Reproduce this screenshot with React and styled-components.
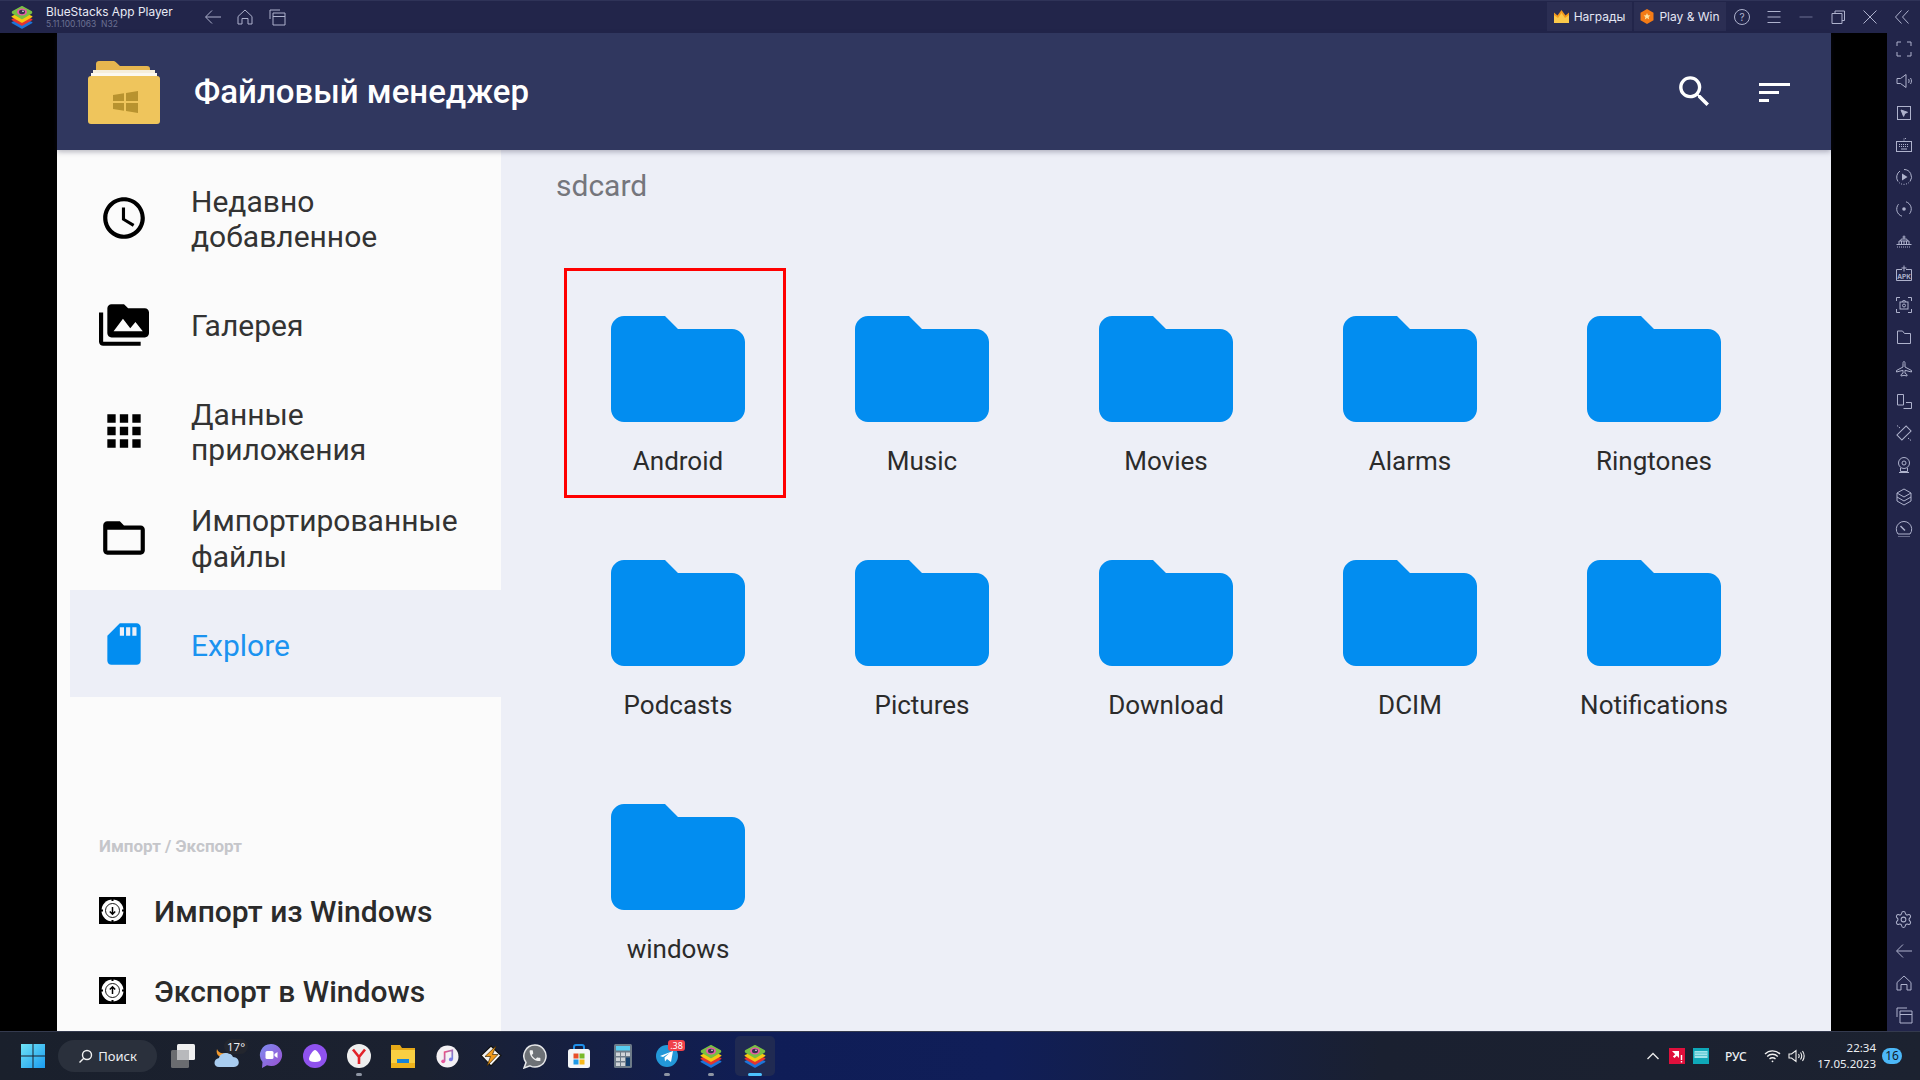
import React from 'react';
import styled, { createGlobalStyle } from 'styled-components';
import { MdAccessTime, MdPermMedia, MdApps, MdFolderOpen, MdSdStorage, MdSearch } from 'react-icons/md';
import { Settings } from 'lucide-react';

const GlobalStyle = createGlobalStyle`
  html, body {
    margin: 0;
    padding: 0;
    background: #000;
    overflow: hidden;
  }
  * {
    box-sizing: border-box;
  }
`;

const Screen = styled.div`
  width: 1920px;
  height: 1080px;
  display: flex;
  flex-direction: column;
  font-family: Roboto, "Noto Sans", sans-serif;
`;

// BlueStacks window chrome
const TitleBar = styled.div`
  height: 33px;
  flex: none;
  display: flex;
  align-items: stretch;
  padding: 1px 2px 2px 10px;
  background: #22254a;
  border-top: 1px solid #2f3358;
  color: #e4e6f2;
  font-family: Inter, sans-serif;
`;

const AppLogo = styled.div`
  width: 36px;
  display: flex;
  align-items: center;
`;

const AppName = styled.div`
  width: 151px;
  display: flex;
  flex-direction: column;
  justify-content: center;
`;

const AppTitle = styled.div`
  font-size: 11.9px;
  line-height: 15px;
  color: #e8eaf5;
  white-space: nowrap;
`;

const AppVersion = styled.div`
  font-size: 8.5px;
  line-height: 10px;
  color: #6b7092;
  white-space: pre;
`;

const ChromeButton = styled.div`
  width: 32px;
  display: flex;
  align-items: center;
  justify-content: center;
  color: ${(p) => p.$color || '#aeb2cd'};
`;

const ChromeRight = styled.div`
  margin-left: auto;
  display: flex;
  align-items: stretch;
`;

const ChromeTab = styled.div`
  width: ${(p) => p.$width}px;
  margin-right: ${(p) => p.$gap || 0}px;
  display: flex;
  align-items: center;
  justify-content: center;
  gap: 5px;
  background: #2b2e53;
  font-size: 12px;
  color: #e4e6f4;
`;

const Middle = styled.div`
  flex: 1;
  min-height: 0;
  display: flex;
  background: #000;
  padding-left: 57px;
`;

const AndroidApp = styled.div`
  width: 1774px;
  display: flex;
  flex-direction: column;
`;

const Rail = styled.div`
  width: 33px;
  margin-left: auto;
  flex: none;
  display: flex;
  flex-direction: column;
  justify-content: space-between;
  background: #22254a;
  color: #aeb2cc;
`;

const RailGroup = styled.div`
  display: flex;
  flex-direction: column;
`;

const RailButton = styled.div`
  height: 32px;
  display: flex;
  align-items: center;
  justify-content: center;
`;

// File manager header
const Header = styled.header`
  position: relative;
  z-index: 1;
  height: 117px;
  flex: none;
  display: flex;
  align-items: center;
  padding-left: 31px;
  background: #30375f;
  box-shadow: 0 2px 5px rgba(30, 30, 60, 0.3);
`;

const HeaderLogo = styled.div`
  width: 72px;
  height: 63px;
  margin-top: 1px;
`;

const HeaderTitle = styled.h1`
  margin: 0 0 0 34px;
  font-size: 33px;
  font-weight: 500;
  color: #fff;
  white-space: nowrap;
`;

const HeaderActions = styled.div`
  margin-left: auto;
  display: flex;
  align-items: center;
  padding-right: 41px;
  color: #fff;
`;

const SearchButton = styled.div`
  width: 41px;
  height: 41px;
  margin: -1px 44px 0 0;
  font-size: 41px;
  line-height: 0;
`;

const SortButton = styled.div`
  width: 31px;
  margin-top: 1px;
  display: flex;
  flex-direction: column;
  gap: 5px;
`;

const SortBar = styled.div`
  height: 3px;
  width: ${(p) => p.$width}px;
  background: #fff;
`;

const Body = styled.div`
  flex: 1;
  min-height: 0;
  display: flex;
`;

// Left navigation
const Sidebar = styled.nav`
  width: 444px;
  flex: none;
  display: flex;
  flex-direction: column;
  padding-top: 14px;
  background: #fbfbfb;
`;

const NavRow = styled.div`
  height: 106.5px;
  flex: none;
  margin-left: 13px;
  padding: 2px 0 0 29px;
  display: flex;
  align-items: center;
  gap: 42px;
  background: ${(p) => (p.$active ? '#edeff7' : 'transparent')};
  color: ${(p) => (p.$active ? '#1b93f0' : '#333')};
`;

const NavIcon = styled.div`
  width: 50px;
  height: 50px;
  flex: none;
  font-size: 50px;
  line-height: 0;
  color: ${(p) => (p.$active ? '#028df0' : '#000')};
`;

const NavText = styled.div`
  margin-top: 2px;
  font-size: 30px;
  line-height: 35.5px;
`;

const SectionLabel = styled.div`
  margin: 140px 0 0 42px;
  font-size: 17px;
  line-height: 19px;
  font-weight: 700;
  color: #c5c6ca;
`;

const TransferList = styled.div`
  margin-top: 15px;
  padding-left: 42px;
  display: flex;
  flex-direction: column;
`;

const TransferRow = styled.div`
  height: 80px;
  display: flex;
  align-items: center;
  gap: 28px;
`;

const TransferText = styled.div`
  margin-top: 2px;
  font-size: 30px;
  font-weight: 500;
  color: #2b2b2b;
  white-space: nowrap;
`;

// Folder grid
const Main = styled.main`
  flex: 1;
  padding-left: 55px;
  background: #edeff7;
`;

const PathLabel = styled.div`
  height: 118px;
  padding-top: 17px;
  font-size: 30px;
  line-height: 38px;
  color: #75767c;
`;

const FolderGrid = styled.div`
  display: grid;
  grid-template-columns: repeat(5, 244px);
  grid-auto-rows: 244px;
`;

const FolderCell = styled.div`
  position: relative;
  display: flex;
  flex-direction: column;
  align-items: center;
  padding-top: 48px;
`;

const FolderName = styled.div`
  margin-top: 24px;
  font-size: 26px;
  line-height: 30px;
  color: #2b2b2b;
`;

const Highlight = styled.div`
  position: absolute;
  left: 8px;
  top: 0;
  width: 222px;
  height: 230px;
  border: 3px solid #f00;
`;

// Windows taskbar
const Taskbar = styled.footer`
  height: 49px;
  flex: none;
  display: flex;
  align-items: center;
  padding-left: 11px;
  border-top: 1px solid #343a4e;
  background: linear-gradient(90deg, #1a202c 0%, #1b2130 22%, #0f1d57 40%, #101e58 52%, #1a2030 72%, #1c2230 100%);
  font-family: "Noto Sans", sans-serif;
  color: #eceef2;
`;

const TaskSlot = styled.div`
  position: relative;
  width: 44px;
  height: 44px;
  flex: none;
  display: flex;
  align-items: center;
  justify-content: center;
`;

const ActiveBox = styled.div`
  position: absolute;
  inset: 2px;
  border-radius: 5px;
  background: #202a52;
`;

const LogoLayer = styled.div`
  position: relative;
  display: flex;
`;

const RunDot = styled.div`
  position: absolute;
  left: 50%;
  bottom: 2px;
  width: ${(p) => (p.$active ? 14 : 6)}px;
  height: 3px;
  margin-left: ${(p) => (p.$active ? -7 : -3)}px;
  border-radius: 2px;
  background: ${(p) => (p.$active ? '#4cc2ff' : '#8e95a3')};
`;

const SearchPill = styled.div`
  width: 99px;
  height: 32px;
  margin: 0 4px 0 3px;
  flex: none;
  display: flex;
  align-items: center;
  justify-content: center;
  gap: 5px;
  border-radius: 16px;
  background: #2a303c;
  font-size: 13px;
`;

const WeatherBadge = styled.div`
  position: absolute;
  left: 19px;
  top: 5px;
  padding: 0 3px;
  border-radius: 8px;
  background: #23262e;
  font-size: 11.5px;
  line-height: 15px;
`;

const CountBadge = styled.div`
  position: absolute;
  left: 23px;
  top: 6px;
  width: 17px;
  height: 11px;
  border-radius: 3px;
  background: #f0414a;
  color: #fff;
  font-size: 9px;
  line-height: 11px;
  text-align: center;
`;

const Tray = styled.div`
  margin-left: auto;
  display: flex;
  align-items: center;
`;

const TrayIcon = styled.div`
  width: ${(p) => p.$width || 24}px;
  display: flex;
  align-items: center;
  justify-content: center;
`;

const TrayLang = styled.div`
  width: 21px;
  margin: 0 14px 0 12px;
  font-size: 12px;
  font-weight: 500;
  text-align: center;
`;

const Clock = styled.div`
  margin-left: 1px;
  width: 67px;
  text-align: right;
  font-size: 11.5px;
  line-height: 16px;
  white-space: nowrap;
`;

const NoticeBadge = styled.div`
  width: 20px;
  height: 16px;
  margin: 0 18px 0 6px;
  border-radius: 8px;
  background: #4cb8f8;
  color: #10202c;
  font-size: 12px;
  line-height: 16px;
  text-align: center;
`;

const Line = ({ size = 20, children, width = 1 }) => (
  <svg width={size} height={size} viewBox="0 0 20 20" fill="none" stroke="currentColor" strokeWidth={width}>
    {children}
  </svg>
);

const BackIcon = () => (
  <Line>
    <path d="M18 10H3M9 3.500L2.500 10 9 16.500" />
  </Line>
);

const HomeIcon = () => (
  <Line>
    <path d="M3 9.500L10 3l7 6.500V17h-4v-5.500H7V17H3z" />
  </Line>
);

const RecentIcon = () => (
  <Line>
    <path d="M3 12V3h10M6 6h12v12H6zM6 9.500h12" />
  </Line>
);

const BsLogo = ({ size = 24 }) => (
  <svg width={size} height={size} viewBox="0 0 24 24">
    <path d="M12 12.500l10 4.500c.6.300.6.800 0 1.200L12.800 23.500c-.5.300-1.100.300-1.600 0L2 18.200c-.6-.4-.6-.9 0-1.200z" fill="#1d74d8" />
    <path d="M12 9.500l10 4.500c.6.300.6.800 0 1.200L12.800 20.500c-.5.300-1.100.300-1.600 0L2 15.200c-.6-.4-.6-.9 0-1.200z" fill="#e5342f" />
    <path d="M12 6.500l10 4.500c.6.300.6.800 0 1.200L12.800 17.500c-.5.300-1.100.300-1.600 0L2 12.200c-.6-.4-.6-.9 0-1.200z" fill="#f7c811" />
    <path d="M11.200 1.300c.5-.3 1.100-.3 1.600 0L21.500 6c1 .5 1 2.200 0 2.800L12.800 14c-.5.300-1.100.300-1.600 0L2.500 8.800c-1-.6-1-2.300 0-2.800z" fill="#78c043" />
    <ellipse cx="12" cy="7" rx="5" ry="3.500" fill="#e85aa6" />
    <ellipse cx="12" cy="7" rx="3" ry="2.200" fill="#37344e" />
    <circle cx="13" cy="6.300" r=".8" fill="#fff" />
  </svg>
);

const CrownIcon = () => (
  <svg width="15" height="13" viewBox="0 0 15 13">
    <path d="M0 2.500l3.500 3L7.500 0l4 5.500 3.500-3V13H0z" fill="#f59a1c" />
    <path d="M7.500 3l3.500 5 4-3v8H0V5l4 3z" fill="#fbc94a" />
  </svg>
);

const HexStar = () => (
  <svg width="14" height="15" viewBox="0 0 14 15">
    <path d="M7 0l6.500 3.700v7.600L7 15 .5 11.300V3.700z" fill="#f47b16" />
    <path d="M7 4l1 2.200 2.400.2-1.800 1.600.6 2.400L7 9.100l-2.200 1.300.6-2.400-1.800-1.600L6 6.200z" fill="#fde2a0" />
  </svg>
);

const FolderLogo = () => (
  <svg width="72" height="63" viewBox="0 0 72 63">
    <path d="M8 20V3c0-1.700 1.300-3 3-3h14c1.500 0 2.500.6 3.500 1.800L32 5h27c2 0 3 1 3 3v12z" fill="#e6b64f" />
    <rect x="5" y="9" width="62" height="8" fill="#f5eedb" />
    <rect x="3" y="12" width="66" height="6" fill="#fbf8ef" />
    <rect x="0" y="15" width="72" height="48" rx="3" fill="#efc55c" />
    <path d="M25 34l11-1.700V40H25zM38 32l12-2v10H38zM25 42h11v7.700L25 48zM38 42h12v10l-12-2z" fill="#b8932f" />
  </svg>
);

const FolderIcon = () => (
  <svg width="134" height="106" viewBox="0 0 134 106">
    <path
      d="M13 0h41l13 13h54c7 0 13 6 13 13v67c0 7-6 13-13 13H13c-7 0-13-6-13-13V13C0 6 6 0 13 0z"
      fill="#028df0"
    />
  </svg>
);

const TransferIcon = ({ up }) => (
  <svg width="27" height="27" viewBox="0 0 27 27" style={{ flex: 'none' }}>
    <rect width="27" height="27" fill="#000" />
    <circle cx="13.500" cy="13.500" r="11" fill="#fff" />
    <circle cx="13.500" cy="13.500" r="7" fill="#fff" stroke="#000" strokeWidth=".9" />
    <path d="M13.500 0v4M13.500 23v4M0 13.500h4M23 13.500h4" stroke="#000" strokeWidth="2" />
    <path
      d={up ? 'M13.500 17v-7M10.800 12.500L13.500 9.800l2.700 2.700' : 'M13.500 10v7M10.800 14.500L13.500 17.200l2.700-2.700'}
      stroke="#000"
      strokeWidth="1.500"
      fill="none"
    />
  </svg>
);

const railTop = [
  <Line key="full"><path d="M3 7V3h4M13 3h4v4M17 13v4h-4M7 17H3v-4" /></Line>,
  <Line key="vol"><path d="M3 7.500h3.500L12 3.500v13l-5.500-4H3zM14.500 8c.8 1 .8 3 0 4M16.500 7c1.300 2 1.300 4 0 6" /></Line>,
  <Line key="cursor">
    <rect x="3.500" y="3.500" width="13" height="13" />
    <path d="M7 7l6.500 2.300-2.700 1.100-1.200 3z" fill="currentColor" />
  </Line>,
  <Line key="keys">
    <rect x="2.500" y="6.500" width="15" height="10" />
    <path d="M10 6.500V3.500h3M5 9.500h10M5 11.500h10" strokeDasharray="1 1" />
    <path d="M7 14h6" />
  </Line>,
  <Line key="macro">
    <path d="M10 2.500a7.500 7.500 0 0 1 6 12M4 14.500a7.500 7.500 0 0 1 2-10.500" />
    <path d="M5 15.500c2.500 2.500 7 2.500 10 0" strokeDasharray="1 1.500" />
    <path d="M8 6.500l5.500 3.500L8 13.500z" fill="currentColor" stroke="none" />
  </Line>,
  <Line key="sync">
    <path d="M12 2.800a7.500 7.500 0 0 1 3.500 12M8 17.200a7.500 7.500 0 0 1-3.500-12" />
    <circle cx="10" cy="10" r="1.800" fill="currentColor" stroke="none" />
  </Line>,
  <Line key="shake">
    <path d="M2.500 13.500h15M5 13.500V10h10v3.500M7.500 10v3.500M10 10v3.500M12.500 10v3.500M6.500 10l.8-2h5.400l.8 2M10 8V4.500M8.500 6h3" />
    <path d="M3 16h14" strokeDasharray="1 1" />
  </Line>,
  <Line key="apk">
    <path d="M8 6.500H2.500v11h15v-11H12M10 2.500v6M7.500 5h5" />
    <text x="10" y="15.500" textAnchor="middle" fontSize="6.500" fontWeight="700" fontFamily="Inter, sans-serif" fill="currentColor" stroke="none">APK</text>
  </Line>,
  <Line key="shot">
    <path d="M2.500 6V2.500H6M14 2.500h3.500V6M17.500 14v3.500H14M6 17.500H2.500V14" />
    <rect x="6" y="7" width="8" height="7" />
    <circle cx="10" cy="10.500" r="1.500" />
    <path d="M8 7l.8-1.300h2.400L12 7" />
  </Line>,
  <Line key="folder"><path d="M3.500 4h5l2 2.500h6v10h-13z" /></Line>,
  <Line key="plane"><path d="M10 2.500c.8 0 1 1 1 2V8l6.500 3.500V13L11 11.300v3l2 1.300v1.400l-3-.7-3 .7v-1.400l2-1.300v-3L2.500 13v-1.500L9 8V4.500c0-1 .2-2 1-2z" /></Line>,
  <Line key="rotate"><path d="M3.500 3.500h6v10.500h-6zM12 11.500h5.500v6h-8" /></Line>,
  <Line key="tilt">
    <rect x="6.500" y="3.500" width="7" height="13" transform="rotate(45 10 10)" />
    <path d="M3 2.500l3 2.500M14 15l3 2.500" strokeDasharray="1.500 1" />
  </Line>,
  <Line key="cam">
    <circle cx="10" cy="8" r="5.500" />
    <circle cx="10" cy="8" r="2" />
    <path d="M6.500 13v3.500h7V13M5 17.500h10" />
  </Line>,
  <Line key="layers"><path d="M10 2l7 4v8l-7 4-7-4V6zM3 6l7 4 7-4M3 10l7 4 7-4" /></Line>,
  <Line key="gauge">
    <path d="M4 15a7.700 7.700 0 1 1 12 0z" />
    <path d="M6.500 7l4.500 4.500" strokeWidth="1.500" />
    <path d="M4.500 17.500h11" strokeDasharray="1 1" />
  </Line>,
];

const folders = [
  'Android', 'Music', 'Movies', 'Alarms', 'Ringtones',
  'Podcasts', 'Pictures', 'Download', 'DCIM', 'Notifications',
  'windows',
];

const navItems = [
  { label: <>Недавно<br />добавленное</>, icon: <MdAccessTime /> },
  { label: 'Галерея', icon: <MdPermMedia /> },
  { label: <>Данные<br />приложения</>, icon: <MdApps /> },
  { label: <>Импортированные<br />файлы</>, icon: <MdFolderOpen /> },
  { label: 'Explore', icon: <MdSdStorage />, active: true },
];

const App = () => {
  return (
    <>
      <GlobalStyle />
      <Screen>
        <TitleBar>
          <AppLogo><BsLogo /></AppLogo>
          <AppName>
            <AppTitle>BlueStacks App Player</AppTitle>
            <AppVersion>5.11.100.1063  N32</AppVersion>
          </AppName>
          <ChromeButton><BackIcon /></ChromeButton>
          <ChromeButton><HomeIcon /></ChromeButton>
          <ChromeButton><RecentIcon /></ChromeButton>
          <ChromeRight>
            <ChromeTab $width={85} $gap={2}><CrownIcon />Награды</ChromeTab>
            <ChromeTab $width={92}><HexStar />Play &amp; Win</ChromeTab>
            <ChromeButton>
              <Line>
                <circle cx="10" cy="10" r="7.500" />
                <text x="10" y="13.500" textAnchor="middle" fontSize="10" fontFamily="Inter, sans-serif" fill="currentColor" stroke="none">?</text>
              </Line>
            </ChromeButton>
            <ChromeButton><Line><path d="M3.500 4.500h13M3.500 10h13M3.500 15.500h13" /></Line></ChromeButton>
            <ChromeButton $color="#6c7092"><Line><path d="M3.500 10h13" /></Line></ChromeButton>
            <ChromeButton><Line><path d="M7 6.500V4h9.500v9.500H14M4 6.500h10v10H4z" /></Line></ChromeButton>
            <ChromeButton><Line><path d="M3.500 3.500l13 13M16.500 3.500l-13 13" /></Line></ChromeButton>
            <ChromeButton><Line><path d="M9.500 3.500L3.500 10l6 6.500M16.500 3.500L10.500 10l6 6.500" /></Line></ChromeButton>
          </ChromeRight>
        </TitleBar>

        <Middle>
          <AndroidApp>
            <Header>
              <HeaderLogo><FolderLogo /></HeaderLogo>
              <HeaderTitle>Файловый менеджер</HeaderTitle>
              <HeaderActions>
                <SearchButton><MdSearch /></SearchButton>
                <SortButton>
                  <SortBar $width={31} />
                  <SortBar $width={20} />
                  <SortBar $width={10} />
                </SortButton>
              </HeaderActions>
            </Header>
            <Body>
              <Sidebar>
                {navItems.map((item, i) => (
                  <NavRow key={i} $active={item.active}>
                    <NavIcon $active={item.active}>{item.icon}</NavIcon>
                    <NavText>{item.label}</NavText>
                  </NavRow>
                ))}
                <SectionLabel>Импорт / Экспорт</SectionLabel>
                <TransferList>
                  <TransferRow>
                    <TransferIcon />
                    <TransferText>Импорт из Windows</TransferText>
                  </TransferRow>
                  <TransferRow>
                    <TransferIcon up />
                    <TransferText>Экспорт в Windows</TransferText>
                  </TransferRow>
                </TransferList>
              </Sidebar>
              <Main>
                <PathLabel>sdcard</PathLabel>
                <FolderGrid>
                  {folders.map((name, i) => (
                    <FolderCell key={name}>
                      <FolderIcon />
                      <FolderName>{name}</FolderName>
                      {i === 0 && <Highlight />}
                    </FolderCell>
                  ))}
                </FolderGrid>
              </Main>
            </Body>
          </AndroidApp>
          <Rail>
            <RailGroup>
              {railTop.map((icon, i) => <RailButton key={i}>{icon}</RailButton>)}
            </RailGroup>
            <RailGroup>
              <RailButton><Settings size={19} strokeWidth={1.3} /></RailButton>
              <RailButton><BackIcon /></RailButton>
              <RailButton><HomeIcon /></RailButton>
              <RailButton><RecentIcon /></RailButton>
            </RailGroup>
          </Rail>
        </Middle>

        <Taskbar>
          <TaskSlot>
            <svg width="24" height="24" viewBox="0 0 24 24">
              <defs>
                <linearGradient id="win" x1="0" y1="0" x2="1" y2="1">
                  <stop offset="0" stopColor="#6fe3f5" />
                  <stop offset="1" stopColor="#1a9bf0" />
                </linearGradient>
              </defs>
              <path d="M0 0h11.500v11.500H0zM12.500 0H24v11.500H12.500zM0 12.500h11.500V24H0zM12.500 12.500H24V24H12.500z" fill="url(#win)" />
            </svg>
          </TaskSlot>
          <SearchPill>
            <svg width="15" height="15" viewBox="0 0 15 15" fill="none" stroke="#f2f2f2" strokeWidth="1.400">
              <circle cx="9" cy="6" r="4.500" />
              <path d="M5.800 9.200L1.500 13.500" />
            </svg>
            Поиск
          </SearchPill>
          <TaskSlot>
            <svg width="24" height="24" viewBox="0 0 24 24">
              <rect y="6" width="18" height="18" rx="1.500" fill="#6a6c70" />
              <rect x="6" width="18" height="16" rx="1.500" fill="#f0f0f0" />
              <rect x="6" y="6" width="12" height="10" fill="#b8b9bc" />
            </svg>
          </TaskSlot>
          <TaskSlot>
            <svg width="26" height="24" viewBox="0 0 26 24">
              <path d="M3 5c1 3 4 5 8 4-1 3-4 4-6 3-2-1-3-4-2-7z" fill="#f29a2e" />
              <path d="M5 23c-6 0-6-8 0-9 1-6 12-7 14-1 7 0 8 10 1 10z" fill="#a9cdf0" />
            </svg>
            <WeatherBadge>17°</WeatherBadge>
          </TaskSlot>
          <TaskSlot>
            <svg width="24" height="26" viewBox="0 0 24 26">
              <defs>
                <linearGradient id="vid" x1="0" y1="0" x2="1" y2="1">
                  <stop offset="0" stopColor="#7d8cf0" />
                  <stop offset="1" stopColor="#9a4fd0" />
                </linearGradient>
              </defs>
              <path d="M12 1a11 11 0 1 1-4 21.200L3 25l.5-6A11 11 0 0 1 12 1z" fill="url(#vid)" />
              <rect x="6.500" y="8" width="8" height="8" rx="1.500" fill="#fff" />
              <path d="M15.500 11l3-2v6l-3-2z" fill="#fff" />
            </svg>
          </TaskSlot>
          <TaskSlot>
            <svg width="24" height="24" viewBox="0 0 24 24">
              <circle cx="12" cy="12" r="12" fill="#8f52ee" />
              <path d="M12 6c2 0 6 6 6 9 0 2-2 3-6 3s-6-1-6-3c0-3 4-9 6-9z" fill="#fff" />
            </svg>
          </TaskSlot>
          <TaskSlot>
            <svg width="24" height="24" viewBox="0 0 24 24">
              <circle cx="12" cy="12" r="12" fill="#efefef" />
              <path d="M6 5.500l6 7.500 6-7.500M12 13v7" stroke="#e2232a" strokeWidth="2.600" fill="none" />
            </svg>
            <RunDot />
          </TaskSlot>
          <TaskSlot>
            <svg width="24" height="24" viewBox="0 0 24 24">
              <path d="M0 1h9l2 3h13v6H0z" fill="#e6a917" />
              <path d="M0 6h24v18H0z" fill="#f9cf42" />
              <path d="M6 15h12v4H6z" fill="#1683d8" />
              <path d="M0 19h24v5H0z" fill="#eeb31c" />
            </svg>
          </TaskSlot>
          <TaskSlot>
            <svg width="23" height="23" viewBox="0 0 24 24">
              <defs>
                <linearGradient id="tune" x1="0" y1="0" x2="1" y2="1">
                  <stop offset="0" stopColor="#f54b7a" />
                  <stop offset="1" stopColor="#5b8ff0" />
                </linearGradient>
              </defs>
              <circle cx="12" cy="12" r="11.500" fill="#f4f1f4" />
              <path d="M9 17V7.500l8-2V15" stroke="url(#tune)" strokeWidth="1.800" fill="none" />
              <circle cx="7.500" cy="17" r="2" fill="#e85a9c" />
              <circle cx="15.500" cy="15" r="2" fill="#7d7ce8" />
            </svg>
          </TaskSlot>
          <TaskSlot>
            <svg width="22" height="24" viewBox="0 0 22 24">
              <path d="M11 2l10 9.500L11 22 1 11.500z" fill="#f2f2f2" stroke="#111" strokeWidth="1.200" />
              <path d="M16 2L5 12.500h5.500L7 22l11-11.500h-5.500z" fill="#f09a1c" stroke="#3a2606" strokeWidth=".7" />
            </svg>
          </TaskSlot>
          <TaskSlot>
            <svg width="24" height="25" viewBox="0 0 24 25">
              <path d="M12 1a11 11 0 1 1-5 20.800L1 24l2-5.500A11 11 0 0 1 12 1z" fill="#6d7176" stroke="#e6e7e9" strokeWidth="1.500" />
              <path
                transform="translate(4.800 4.500) scale(.6)"
                d="M6.620 10.790c1.440 2.830 3.760 5.140 6.590 6.590l2.200-2.200c.27-.27.67-.36 1.020-.24 1.120.37 2.330.57 3.570.57.550 0 1 .45 1 1V20c0 .55-.45 1-1 1-9.390 0-17-7.610-17-17 0-.55.45-1 1-1h3.500c.55 0 1 .45 1 1 0 1.250.2 2.450.57 3.570.11.35.03.74-.25 1.020l-2.200 2.200z"
                fill="#f0f0f0"
              />
            </svg>
          </TaskSlot>
          <TaskSlot>
            <svg width="24" height="24" viewBox="0 0 24 24">
              <path d="M7 6V3c0-1 1-2 2-2h6c1 0 2 1 2 2v3" stroke="#1e8fe8" strokeWidth="2" fill="none" />
              <rect x="1" y="5" width="22" height="19" rx="2.500" fill="#f4f6f8" />
              <path d="M6.500 9.500h5v5h-5z" fill="#e8502a" />
              <path d="M12.500 9.500h5v5h-5z" fill="#79b92a" />
              <path d="M6.500 15.500h5v5h-5z" fill="#1f9ae8" />
              <path d="M12.500 15.500h5v5h-5z" fill="#f7b81a" />
            </svg>
          </TaskSlot>
          <TaskSlot>
            <svg width="18" height="24" viewBox="0 0 18 24">
              <rect width="18" height="24" rx="1.500" fill="#6d7b88" />
              <rect x="2" y="2" width="14" height="4.500" fill="#58cdf0" />
              <path d="M2 8.500h4v3.500H2zM7 8.500h4v3.500H7zM12 8.500h4v3.500h-4zM2 13.500h4V17H2zM7 13.500h4V17H7zM2 18.500h4V22H2zM7 18.500h4V22H7z" fill="#cfd4d8" />
              <path d="M12 13.500h4V22h-4z" fill="#123f6e" />
            </svg>
          </TaskSlot>
          <TaskSlot>
            <svg width="22" height="22" viewBox="0 0 22 22">
              <circle cx="11" cy="11" r="11" fill="#2398d8" />
              <path d="M4 11l13-5-2 11-4-3-2 2.500-.5-4 5-4.500-6.500 4z" fill="#fff" />
            </svg>
            <CountBadge>.38</CountBadge>
            <RunDot />
          </TaskSlot>
          <TaskSlot>
            <BsLogo />
            <RunDot />
          </TaskSlot>
          <TaskSlot>
            <ActiveBox />
            <LogoLayer><BsLogo /></LogoLayer>
            <RunDot $active />
          </TaskSlot>

          <Tray>
            <TrayIcon $width={24}>
              <svg width="14" height="10" viewBox="0 0 14 10" fill="none" stroke="#e8e8e8" strokeWidth="1.400">
                <path d="M1.500 8L7 2.500 12.500 8" />
              </svg>
            </TrayIcon>
            <TrayIcon $width={24}>
              <svg width="16" height="16" viewBox="0 0 16 16">
                <rect width="16" height="16" fill="#e0103c" />
                <path d="M3 3h7v7l-2.200-2.200-2.300 2.300-1.600-1.600 2.300-2.300z" fill="#fff" />
                <path d="M12.500 7v5M12.500 13v1.500" stroke="#fff" strokeWidth="1.400" />
              </svg>
            </TrayIcon>
            <TrayIcon $width={24}>
              <svg width="16" height="16" viewBox="0 0 16 16">
                <rect width="16" height="16" fill="#0fa8b8" />
                <rect x="1.500" y="3" width="13" height="7" fill="#9fe4ea" />
                <path d="M2.500 5h11M2.500 7.500h11M3 12.500h10" stroke="#0fa8b8" strokeDasharray="1 1" />
              </svg>
            </TrayIcon>
            <TrayLang>РУС</TrayLang>
            <TrayIcon $width={24}>
              <svg width="17" height="14" viewBox="0 0 17 14" fill="none" stroke="#f0f0f0" strokeWidth="1.300">
                <path d="M1 5a10.500 10.500 0 0 1 15 0M3.200 7.500a7.400 7.400 0 0 1 10.600 0M5.500 10a4.200 4.200 0 0 1 6 0" />
                <circle cx="8.500" cy="12.300" r=".9" fill="#f0f0f0" stroke="none" />
              </svg>
            </TrayIcon>
            <TrayIcon $width={24}>
              <svg width="17" height="14" viewBox="0 0 17 14" fill="none" stroke="#f0f0f0" strokeWidth="1.100">
                <path d="M1 5h2.500L8 1.500v11L3.500 9H1zM10.500 5c.8 1.200.8 2.800 0 4M12.500 3.500c1.400 2 1.400 5 0 7M14.500 2c2 3 2 7 0 10" />
              </svg>
            </TrayIcon>
            <Clock>22:34<br />17.05.2023</Clock>
            <NoticeBadge>16</NoticeBadge>
          </Tray>
        </Taskbar>
      </Screen>
    </>
  );
};

export default App;
